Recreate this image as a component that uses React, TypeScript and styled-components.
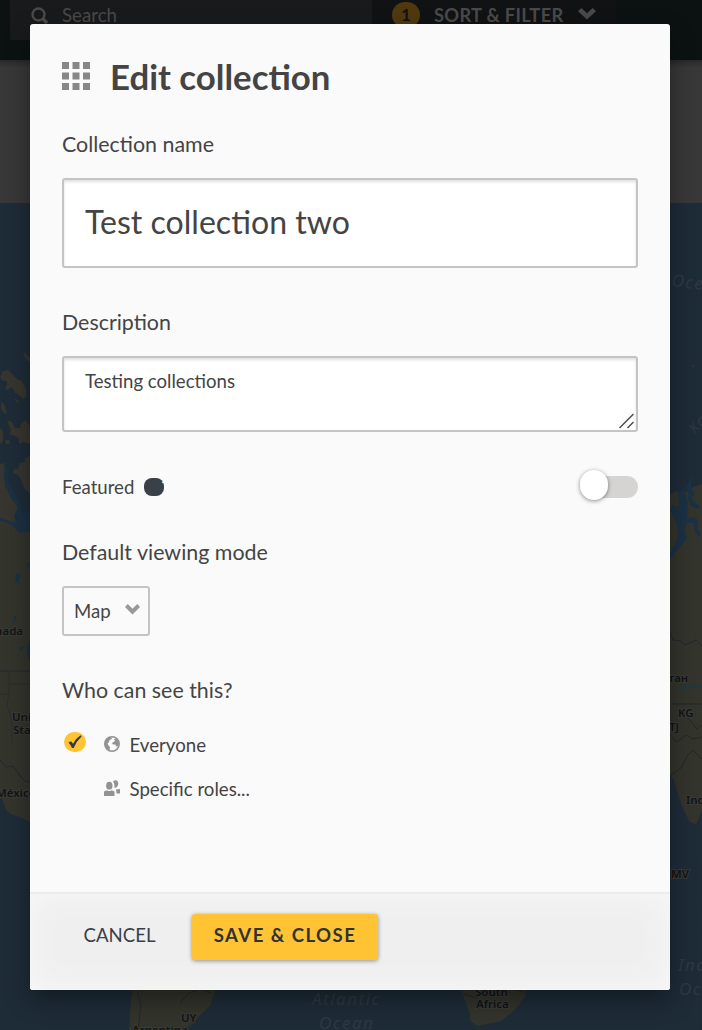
import React from "react";
import styled, { createGlobalStyle } from "styled-components";

const GlobalStyle = createGlobalStyle`
  * { box-sizing: border-box; }
  html, body { margin: 0; height: 100%; overflow: hidden; }
  body { font-family: Lato, "Liberation Sans", sans-serif; color: #444; background: #1e2c38; }
  button, input, textarea { font-family: inherit; color: inherit; }
`;

const Screen = styled.div`
  position: relative;
  width: 702px;
  height: 1030px;
  overflow: hidden;
`;

const Backdrop = styled.div`
  display: flex;
  flex-direction: column;
  height: 100%;
`;

const TopBar = styled.header`
  flex: 0 0 60px;
  display: flex;
  align-items: flex-start;
  padding-left: 10px;
  background: #0c1212;
  color: #4a4a4a;
`;

const SearchField = styled.div`
  display: flex;
  align-items: center;
  width: 362px;
  height: 40px;
  padding: 0 0 9px 21px;
  gap: 13px;
  border-radius: 0 0 0 2px;
  background: #191a1c;
  font-size: 18.7px;
  line-height: 31px;
`;

const FilterButton = styled.div`
  display: flex;
  align-items: center;
  width: 244px;
  height: 40px;
  padding: 0 0 10px 20px;
  background: #111214;
  font-size: 18.3px;
  line-height: 30px;
  font-weight: 700;
  letter-spacing: 0.3px;
`;

const FilterCount = styled.span`
  width: 28px;
  height: 26px;
  margin: -1px 14px 0 0;
  border-radius: 13px;
  background: #51390f;
  color: #14120e;
  font-size: 17px;
  line-height: 26px;
  text-align: center;
`;

const FilterChevron = styled.svg`
  margin: -3px 0 0 14px;
`;

const GreyBand = styled.div`
  flex: 0 0 143px;
  background: linear-gradient(#292929, #383838 8px);
`;

const MapArea = styled.svg`
  display: block;
  flex: 0 0 827px;
`;

const Dialog = styled.section`
  position: absolute;
  left: 30px;
  top: 24px;
  display: flex;
  flex-direction: column;
  width: 640px;
  height: 966px;
  border-radius: 3px;
  overflow: hidden;
  background: #fafafa;
`;

const DialogShadow = styled.div`
  position: absolute;
  left: 30px;
  top: 24px;
  width: 640px;
  height: 966px;
  border-radius: 3px;
  box-shadow: 0 10px 24px rgba(0, 0, 0, 0.4);
`;

const Content = styled.div`
  flex: 1;
  display: flex;
  flex-direction: column;
  align-items: stretch;
  padding: 30px 32px 0;
`;

const TitleRow = styled.div`
  display: flex;
  align-items: center;
  height: 44px;
  gap: 20px;
`;

const GridIcon = styled.svg`
  flex: none;
`;

const Title = styled.h1`
  margin: 2px 0 0;
  font-size: 34.8px;
  line-height: 44px;
  font-weight: 700;
`;

const Label = styled.label<{ $top: number }>`
  margin-top: ${(p) => p.$top}px;
  height: 30px;
  font-size: 21.4px;
  line-height: 30px;
`;

const NameInput = styled.input`
  flex: none;
  height: 90px;
  margin-top: 19px;
  padding: 0 21px 3px;
  border: 2px solid #c4c4c4;
  border-radius: 3px;
  outline: 0;
  background: #fff;
  box-shadow: inset 0 2px 3px rgba(0, 0, 0, 0.12);
  font-size: 32.1px;
`;

const TextBox = styled.div`
  display: flex;
  justify-content: space-between;
  height: 76px;
  margin-top: 19px;
  padding: 9px 2px 0 21px;
  border: 2px solid #c4c4c4;
  border-radius: 3px;
  background: #fff;
  box-shadow: inset 0 2px 3px rgba(0, 0, 0, 0.12);
  font-size: 18.6px;
  line-height: 28px;
`;

const ResizeGrip = styled.svg`
  align-self: flex-end;
`;

const FeaturedRow = styled.div`
  display: flex;
  align-items: center;
  height: 30px;
  margin-top: 40px;
  font-size: 18.6px;
  line-height: 30px;
`;

const HelpDot = styled.span`
  width: 20px;
  height: 18px;
  margin-left: 10px;
  padding-left: 17px;
  border-radius: 8px;
  background: #3a4048;
  color: #fff;
  font-size: 18px;
  line-height: 18px;
`;

const Switch = styled.span`
  width: 54px;
  height: 22px;
  margin-left: auto;
  border-radius: 11px;
  background: #d5d4d2;
`;

const Knob = styled.span`
  display: block;
  width: 28px;
  height: 30px;
  margin: -6px 0 0 -4px;
  border-radius: 14px;
  background: #fff;
  box-shadow: 0 1px 4px rgba(0, 0, 0, 0.45);
`;

const Select = styled.button`
  flex: none;
  display: flex;
  align-items: center;
  justify-content: space-between;
  width: 88px;
  height: 50px;
  margin-top: 19px;
  padding: 0 8px 0 10px;
  border: 2px solid #c4c4c4;
  border-radius: 3px;
  background: #fafafa;
  font-size: 18.6px;
`;

const SelectChevron = styled.svg`
  margin-top: -4px;
`;

const Options = styled.div`
  display: flex;
  flex-direction: column;
  margin-top: 18px;
`;

const Option = styled.div`
  display: grid;
  grid-template-columns: 42px 25.5px auto;
  align-items: center;
  height: 44px;
  font-size: 18.65px;
  line-height: 44px;
`;

const OptionMark = styled.span`
  display: flex;
  padding: 0 0 6px 2px;
`;

const OptionIcon = styled.span`
  display: flex;
  padding-bottom: 2px;
`;

const Footer = styled.footer`
  flex: 0 0 98px;
  display: flex;
  align-items: flex-start;
  padding: 20px 32px 0;
  border-top: 2px solid #ececec;
  background: #efefef;
  box-shadow: inset 0 0 32px #f8f8f8;
`;

const CancelButton = styled.button`
  width: 115px;
  height: 46px;
  margin-right: 15px;
  border: 0;
  background: transparent;
  color: #3a4048;
  font-size: 18.6px;
  padding: 0 0 4px;
`;

const SaveButton = styled.button`
  width: 186px;
  height: 46px;
  padding: 0 0 4px;
  border: 0;
  border-radius: 3px;
  background: #ffc334;
  box-shadow: 0 1px 4px rgba(0, 0, 0, 0.4);
  color: #2f3337;
  font-size: 18.6px;
  font-weight: 700;
  letter-spacing: 1.45px;
`;

const LAND = "#33342c";
const TUNDRA = "#37352f";
const WATER = "#1b3145";

function WorldMap() {
  return (
    <MapArea width="702" height="827" viewBox="0 203 702 827">
      <rect y="203" width="702" height="827" fill="#1e2c38" />
      <g fill={TUNDRA}>
        <path d="M23 355l3-3 2 5 2 1v4l-4-3z" />
        <path d="M3 371l5-1 4 4 6 6 3 0 3 5 2 5 0 6-3 3-4-4-4-2-3-6-4 3-3-1 2-4 0-4-4 0-3-4z" />
        <path d="M14 399l5 1-2 3zM1 402l3 2 3 9-2 1-4-5zM5 440l4 0 1 4-4 0zM0 428l3 3 0 10-3 3z" />
        <path d="M7 420l5 2 3 6 5 0 1-4 4-4 5 6v18l-6-2-5 2 0-6-4-2-6-2 2-3z" />
        <path d="M20 463l5-1 0-4 5-2v38l-6-6-3-9-3-4-5-2 1-4 4 0z" />
        <path d="M0 464l4-1 2 6-2 8 3 10 6 8 5 8 0 7-4 6 2 6 12-1v30H0z" />
      </g>
      <path d="M0 521l7 3 7 6 8-3 8 3v292l-10-5-8-2-6-5-3-8-1-4-2-3z" fill={LAND} />
      <path d="M4 465l4 6 1 12 8 14 4 6 0 7 2 3 3-3 4 4v18l-10 1-8-7-7-4-5-1v-4l6 3 8 2 4-3 0-3-4 0 4-9-7-9-6-12z" fill={WATER} opacity=".9" />
      <g fill={WATER}>
        <path d="M16 573l5 2-2 4 0 5-4-3zM27 562l3 3-2 3zM14 617l3-2-2 5-2 5zM28 644l2-3v22l-3-11zM19 648l5-2-3 5z" />
      </g>
      <path d="M0 671h30M0 760l6 7 7-1 8 11 4 4 5 1" fill="none" stroke="#24272a" />
      <path d="M9 672v20l-2 14 5 15v24M0 694h9M9 684h21" fill="none" stroke="#2b2d29" />
      <path d="M670 495l6-4 4 3 2-5 4 3 7-5 9-3v326l-6 15-7-4-8-17-7-24-4-5v-230z" fill={LAND} />
      <path d="M678 493l6-4 2 8 2 7-1 9 0 9-3 9 3 7-8 10-7 9-5 0 8-12 3-10-1-10-3-8-4-7 2-5 7 2zM689 480l4-6-2 10 1 6 3 3-3 5 2 4 6 4-1 3-8-3-3-7 1-5-4-5 2-4zM685 520l8-3 5 3 0 9 3 5-2 3-4-5-1-9-7 0z" fill={WATER} />
      <path d="M692 364l3 2-2 2z" fill="#37352f" />
      <path d="M670 632l3 8 8 1 4 4 11-5 6 6M670 704h32M670 735l7 7 9-7 7 4 9-2M670 776l11-8 6-12 6-6 9 9M683 712l14 17 5-4" fill="none" stroke="#24272a" />
      <path d="M681 692q3-7 8-6 6 2 13-1" fill="none" stroke="#1f3848" strokeWidth="2" />
      <path d="M670 804l6-3 2 7 6 29 9 18 6-5 2 6 1 174H670z" fill="#1e2c38" />
      <path d="M134 980h84l-3 12-5 14-12 11-7 9-12 4h-50l2-30z" fill={LAND} />
      <path d="M137 991l4 14-3 25M180 1003l9-10 12-4 10 4" fill="none" stroke="#24272a" />
      <path d="M458 985h69l-2 12-11 14-13 10-9 2-15 3-7-6 0-6-5-13z" fill={LAND} />
      <path d="M463 994l10 3 5 0v-6M515 990l10 2" fill="none" stroke="#24272a" />
      <g fontFamily="'Noto Sans', sans-serif" fontSize="11.5" fontWeight="600" fill="#121315" stroke="#3a3b36" strokeWidth="2" paintOrder="stroke">
        <text x="-19" y="635">Canada</text>
        <text x="12" y="721">United</text>
        <text x="13" y="734">States</text>
        <text x="-4" y="797">México</text>
        <text x="628" y="682">Қазақстан</text>
        <text x="678" y="717">KG</text>
        <text x="669" y="731">TJ</text>
        <text x="686" y="804">India</text>
        <text x="671" y="878">MV</text>
        <text x="181" y="1022">UY</text>
        <text x="132" y="1034">Argentina</text>
        <text x="475" y="996">South</text>
        <text x="476" y="1008">Africa</text>
      </g>
      <g fontFamily="'Noto Sans', sans-serif" fontStyle="italic" fontSize="17" letterSpacing="1.5" fill="#303840">
        <text x="671" y="286" transform="rotate(7 671 286)">Ocean</text>
        <text x="678" y="971">Indian</text>
        <text x="679" y="995">Ocean</text>
        <text x="312" y="1005">Atlantic</text>
        <text x="319" y="1029">Ocean</text>
        <text x="695" y="434" fontSize="14" transform="rotate(-48 695 434)">Kara</text>
      </g>
    </MapArea>
  );
}

const CHEVRON = "M0 3.3L3.3 0L9 5.2L14.7 0L18 3.3L9 11.5Z";

export default function App() {
  return (
    <Screen>
      <GlobalStyle />
      <Backdrop>
        <TopBar>
          <SearchField>
            <svg width="18" height="18" viewBox="0 0 18 18" fill="none" stroke="#4a4a4a">
              <circle cx="7.5" cy="7.5" r="6" strokeWidth="2.4" />
              <path d="M12 12l4 4" strokeWidth="3.5" />
            </svg>
            Search
          </SearchField>
          <FilterButton>
            <FilterCount>1</FilterCount>
            SORT &amp; FILTER
            <FilterChevron width="18" height="12" viewBox="0 0 18 12">
              <path d={CHEVRON} fill="#4a4a4a" />
            </FilterChevron>
          </FilterButton>
        </TopBar>
        <GreyBand />
        <WorldMap />
      </Backdrop>
      <DialogShadow />
      <Dialog>
        <Content>
          <TitleRow>
            <GridIcon width="28" height="28" viewBox="0 0 28 28" fill="#878787">
              {[0, 10.5, 21].map((y) =>
                [0, 10.5, 21].map((x) => <rect key={`${x}-${y}`} x={x} y={y} width="7" height="7" />)
              )}
            </GridIcon>
            <Title>Edit collection</Title>
          </TitleRow>
          <Label $top={31}>Collection name</Label>
          <NameInput defaultValue="Test collection two" />
          <Label $top={39}>Description</Label>
          <TextBox>
            Testing collections
            <ResizeGrip width="15" height="17" viewBox="0 0 15 17" fill="none" stroke="#4c4c4c" strokeWidth="1.5">
              <path d="M0.5 15L14.5 1M8.5 15L14.5 9" />
            </ResizeGrip>
          </TextBox>
          <FeaturedRow>
            Featured
            <HelpDot>?</HelpDot>
            <Switch>
              <Knob />
            </Switch>
          </FeaturedRow>
          <Label $top={35}>Default viewing mode</Label>
          <Select>
            Map
            <SelectChevron width="15" height="11" viewBox="0 0 18 12" preserveAspectRatio="none">
              <path d={CHEVRON} fill="#999" />
            </SelectChevron>
          </Select>
          <Label $top={39}>Who can see this?</Label>
          <Options>
            <Option>
              <OptionMark>
                <svg width="22" height="20" viewBox="0 0 22 20">
                  <rect width="22" height="20" rx="10" fill="#ffc334" />
                  <path d="M4.5 10.5L7 9.2L9 11.7Q12 6 16.5 3.2L17.7 4.2Q12.5 9 9.7 16L8 16Q6.8 13 4.5 10.5Z" fill="#333b41" />
                </svg>
              </OptionMark>
              <OptionIcon>
                <svg width="16" height="16" viewBox="0 0 16 16">
                  <circle cx="8" cy="8" r="7.2" fill="none" stroke="#929292" strokeWidth="1.6" />
                  <path d="M1 5Q3 1 7 1L8 3L5.5 4L5 6L3.5 7.5L4.5 9.5L6 11L5.5 13.5L6.5 15L3 13L1 9ZM10 3L13 3L15 7L14 10L12 10.5L11.5 8.5L9 8.5L8 7L9.5 6L11 5Z" fill="#929292" />
                </svg>
              </OptionIcon>
              Everyone
            </Option>
            <Option>
              <OptionMark />
              <OptionIcon>
                <svg width="16" height="16" viewBox="0 0 16 16" fill="#929292">
                  <path d="M9 1.5Q11 -.6 13.2 .7Q15 2.5 13.8 5.5Q12.5 8.3 10.3 7.5Q11 4 9 1.5ZM12 9.5L16 9V13.5H12.5Z" />
                  <ellipse cx="5.3" cy="5.7" rx="3.2" ry="3.9" />
                  <path d="M0 16V11.5L3 10.2Q5.3 12 7.6 10.2L10.5 11.5V16Z" />
                </svg>
              </OptionIcon>
              Specific roles...
            </Option>
          </Options>
        </Content>
        <Footer>
          <CancelButton>CANCEL</CancelButton>
          <SaveButton>SAVE &amp; CLOSE</SaveButton>
        </Footer>
      </Dialog>
    </Screen>
  );
}
